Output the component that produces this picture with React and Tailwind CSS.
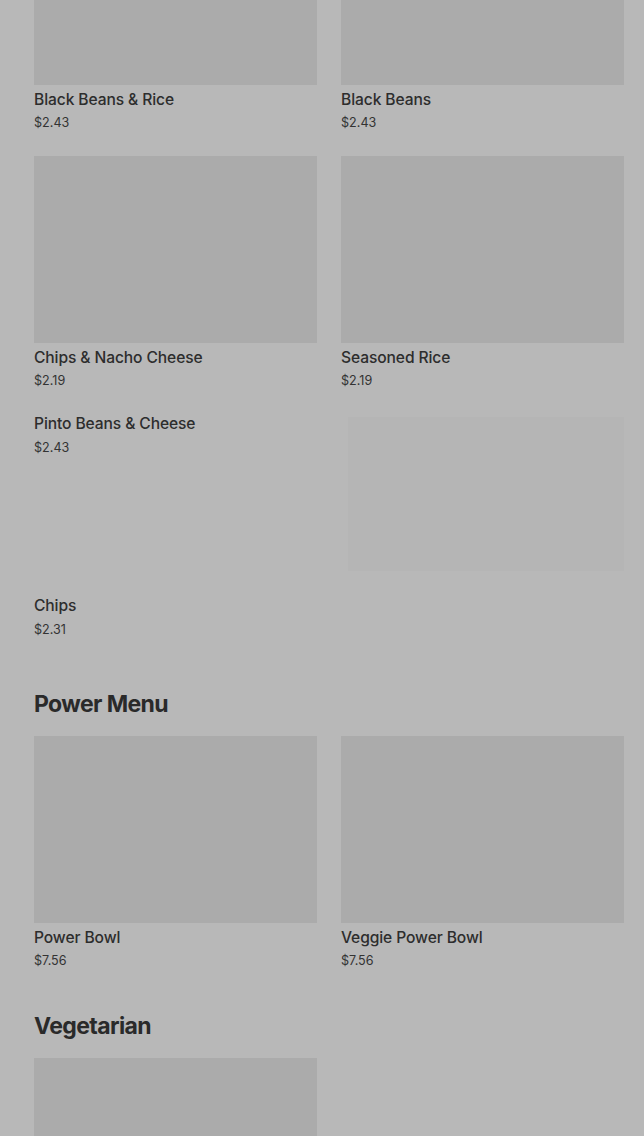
import React from "react";

const sides = [
  { name: "Black Beans & Rice", price: "$2.43", img: "top" },
  { name: "Black Beans", price: "$2.43", img: "top" },
  { name: "Chips & Nacho Cheese", price: "$2.19", img: "full" },
  { name: "Seasoned Rice", price: "$2.19", img: "full" },
  { name: "Pinto Beans & Cheese", price: "$2.43" },
  { placeholder: true },
  { name: "Chips", price: "$2.31" },
];

const power = [
  { name: "Power Bowl", price: "$7.56", img: "full" },
  { name: "Veggie Power Bowl", price: "$7.56", img: "full" },
];

const Item = ({ item }) => {
  if (item.placeholder) {
    return <div className="ml-[7px] mt-[3px] mb-[2px] h-[154px] bg-[#b5b5b5]" />;
  }
  return (
    <div className="flex flex-col">
      {item.img === "top" && <div className="h-[85px] bg-[#ababab]" />}
      {item.img === "full" && <div className="h-[187px] bg-[#ababab]" />}
      <div
        className={`${item.img ? "mt-[5px]" : ""} text-[15.6px] leading-5 font-medium tracking-[-0.1px] text-[#2d2d2d]`}
      >
        {item.name}
      </div>
      <div className={`${item.img ? "mt-[3px]" : "mt-1"} text-[12.6px] leading-5 text-[#333]`}>
        {item.price}
      </div>
    </div>
  );
};

const App = () => {
  return (
    <div
      className="min-h-[1136px] bg-[#b8b8b8] pl-[34px] pr-[20px] overflow-hidden"
      style={{ fontFamily: "Inter, 'Liberation Sans', sans-serif" }}
    >
      {/* Sides */}
      <div className="grid grid-cols-2 gap-x-6 gap-y-[23px]">
        {sides.map((item, i) => (
          <Item key={i} item={item} />
        ))}
      </div>

      {/* Power Menu */}
      <h2 className="mt-12 mb-4 text-[23px] leading-8 font-bold tracking-[-0.6px] text-[#2a2a2a]">
        Power Menu
      </h2>
      <div className="grid grid-cols-2 gap-x-6 gap-y-[23px]">
        {power.map((item, i) => (
          <Item key={i} item={item} />
        ))}
      </div>

      {/* Vegetarian */}
      <h2 className="mt-[39px] mb-4 text-[23px] leading-8 font-bold tracking-[-0.6px] text-[#2a2a2a]">
        Vegetarian
      </h2>
      <div className="grid grid-cols-2 gap-x-6">
        <div className="h-[187px] bg-[#ababab]" />
      </div>
    </div>
  );
};

export default App;
